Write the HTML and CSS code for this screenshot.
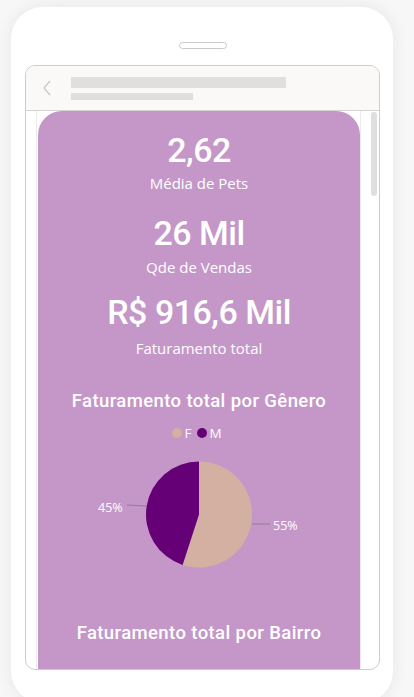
FILE: index.html
```html
<!DOCTYPE html>
<html lang="pt-BR">
<head>
<meta charset="utf-8">
<title>Relatório</title>
<link rel="stylesheet" href="styles.css">
</head>
<body>
<div class="phone">
  <div class="speaker"></div>
  <div class="screen">
    <div class="header">
      <svg class="back" width="8" height="16" viewBox="0 0 8 16"><path d="M7 1 L1 8 L7 15" fill="none" stroke="#c8c6c4" stroke-width="1.2"/></svg>
      <div class="bars">
        <div class="bar bar-long"></div>
        <div class="bar bar-short"></div>
      </div>
    </div>
    <div class="body">
      <div class="canvas">
        <div class="card">
          <div class="kpi kpi-1">
            <div class="value">2,62</div>
            <div class="label">Média de Pets</div>
          </div>
          <div class="kpi kpi-2">
            <div class="value">26 Mil</div>
            <div class="label">Qde de Vendas</div>
          </div>
          <div class="kpi kpi-3">
            <div class="value">R$ 916,6 Mil</div>
            <div class="label">Faturamento total</div>
          </div>
          <div class="chart-title title-genero">Faturamento total por Gênero</div>
          <div class="legend">
            <span class="dot dot-f"></span><span class="legend-text">F</span>
            <span class="dot dot-m"></span><span class="legend-text">M</span>
          </div>
          <svg class="pie" width="322" height="140" viewBox="0 0 322 140">
            <path d="M161 68.5 L161 15.5 A53 53 0 1 1 144.6 118.9 Z" fill="#d3b0a2"/>
            <path d="M161 68.5 L144.6 118.9 A53 53 0 0 1 161 15.5 Z" fill="#660077"/>
            <line x1="89" y1="59" x2="108" y2="60" stroke="#8e7f90" stroke-width="1"/>
            <line x1="214" y1="78" x2="232" y2="78" stroke="#8e7f90" stroke-width="1"/>
            <text x="60" y="65.5" class="pie-label">45%</text>
            <text x="235" y="83.5" class="pie-label">55%</text>
          </svg>
          <div class="chart-title title-bairro">Faturamento total por Bairro</div>
        </div>
      </div>
      <div class="scrollbar"></div>
    </div>
  </div>
</div>
</body>
</html>
```

FILE: styles.css
```css
* { box-sizing: border-box; }
html, body { margin: 0; padding: 0; }
body {
  width: 414px;
  height: 697px;
  overflow: hidden;
  background: #f7f7f7;
  font-family: "Open Sans", "Noto Sans", sans-serif;
}
.phone {
  margin: 7px 0 0 11px;
  width: 382px;
  height: 696px;
  background: #ffffff;
  border-radius: 32px;
  box-shadow: 0 0 14px 3px rgba(0, 0, 0, 0.05);
  display: flex;
  flex-direction: column;
  align-items: flex-start;
}
.speaker {
  margin: 35px 0 0 168px;
  width: 48px;
  height: 7px;
  border: 1px solid #c9c9c9;
  border-radius: 4px;
}
.screen {
  margin: 16px 0 0 14px;
  width: 355px;
  height: 605px;
  border: 1px solid #cfcdcb;
  border-radius: 10px;
  overflow: hidden;
  display: flex;
  flex-direction: column;
  background: #ffffff;
}
.header {
  height: 45px;
  flex: none;
  background: #faf9f8;
  border-bottom: 1px solid #d6d4d2;
  display: flex;
  align-items: center;
  padding-left: 17px;
}
.back { display: block; margin-right: 20px; }
.bars { display: flex; flex-direction: column; gap: 5px; padding-top: 1px; }
.bar { background: #e1dfdd; }
.bar-long { width: 215px; height: 11px; }
.bar-short { width: 122px; height: 7px; }
.body {
  flex: 1;
  display: flex;
  padding-left: 10px;
  overflow: hidden;
}
.canvas {
  width: 325px;
  border-left: 1px solid #ebebeb;
  border-right: 1px solid #ebebeb;
  padding-left: 1px;
}
.card {
  width: 322px;
  min-height: 700px;
  background: #c497c8;
  border-radius: 24px 24px 0 0;
  padding-top: 19px;
  color: #ffffff;
  text-align: center;
}
.value {
  font-family: Roboto, "Liberation Sans", sans-serif;
  font-weight: 500;
  font-size: 34px;
  line-height: 40px;
  letter-spacing: -0.5px;
}
.label {
  font-family: "Open Sans", "Noto Sans", sans-serif;
  font-size: 15px;
  line-height: 20px;
  margin-top: 3px;
}
.kpi-2 { margin-top: 20px; }
.kpi-2 .label { margin-top: 4px; }
.kpi-3 { margin-top: 15px; }
.kpi-3 .label { margin-top: 6px; }
.chart-title {
  font-family: Roboto, "Liberation Sans", sans-serif;
  font-weight: 500;
  font-size: 18.5px;
  line-height: 24px;
  letter-spacing: 0.4px;
}
.title-genero { margin-top: 31px; }
.legend {
  margin-top: 13px;
  height: 14px;
  display: flex;
  justify-content: center;
  align-items: center;
  font-family: "Open Sans", "Noto Sans", sans-serif;
  font-size: 13.5px;
  line-height: 14px;
  padding-right: 4px;
}
.dot {
  width: 10px;
  height: 10px;
  border-radius: 50%;
  margin-right: 2px;
}
.dot-f { background: #d3b0a2; }
.dot-m { background: #660077; margin-left: 6px; }
.legend-text { color: #ffffff; }
.pie { display: block; margin-top: 6px; }
.pie-label {
  font-family: "Open Sans", "Noto Sans", sans-serif;
  font-size: 12.5px;
  fill: #ffffff;
}
.title-bairro { margin-top: 35px; }
.scrollbar {
  margin: 1px 0 0 10px;
  width: 6px;
  height: 84px;
  background: #e1dfdd;
  border-radius: 3px;
}
```
